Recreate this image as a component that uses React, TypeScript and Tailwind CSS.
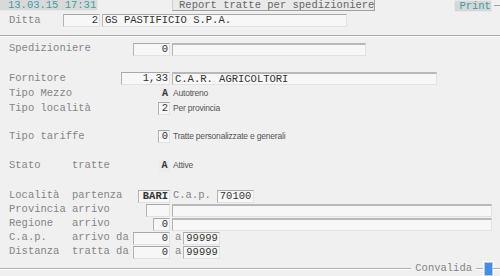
import React from 'react'

const mono = { fontFamily: '"Liberation Mono", "Courier New", monospace' }

function Box({ w, value = '', align = 'right', thick = false, bold = false }: { w: number; value?: string; align?: 'left' | 'right'; thick?: boolean; bold?: boolean }) {
    return (
        <div
            className={`h-[13px] bg-[#f7f7f7] border-l border-b border-r border-l-[#b4b4b4] border-b-[#e2e2e2] border-r-[#e2e2e2] ${thick ? 'border-t-2 border-t-[#b8b8b8]' : 'border-t border-t-[#a8a8a8]'} leading-[11px] text-[#333] whitespace-pre overflow-hidden ${align === 'right' ? 'text-right pr-[1px]' : 'text-left pl-[2px]'} ${bold ? 'font-bold' : ''}`}
            style={{ width: w }}
        >
            {value}
        </div>
    )
}

function Desc({ children }: { children: React.ReactNode }) {
    return <span className="ml-[3px] text-[8.5px] text-[#555] tracking-[-0.2px]" style={{ fontFamily: '"Liberation Sans", Arial, sans-serif' }}>{children}</span>
}

function Row({ label, h = 14, className = '', children, right }: { label: string; h?: number; className?: string; children: React.ReactNode; right?: React.ReactNode }) {
    return (
        <div className={`flex items-center ${className}`} style={{ height: h }}>
            <div className="w-[170px] flex items-center justify-between pl-[9px]">
                <span className="whitespace-pre text-[#858585]">{label}</span>
                {children}
            </div>
            {right}
        </div>
    )
}

export default function App() {
    return (
        <div className="w-[500px] h-[276px] bg-[#f0f0f0] text-[10.5px] overflow-hidden" style={mono}>
            {/* header */}
            <div className="flex items-start h-[13px]">
                <div className="w-[99px] h-[11px] bg-[#d9d9d9] text-[#3b9ea6] leading-[11px] pl-[8px] whitespace-pre border-r border-b border-[#e8e8e8]">13.03.15 17:31</div>
                <div className="ml-[74px] w-[204px] h-[11px] bg-[#e9e9e9] border-r border-b border-[#a0a0a0] border-l border-l-[#d0d0d0] text-[#666] leading-[10px] pl-[6px] whitespace-pre">Report tratte per spedizioniere</div>
                <div className="ml-[79px] w-[38px] h-[12px] bg-[#d6d6d6] border border-[#e8e8e8] text-[#3b9ea6] leading-[10px] pl-[4px]">Print</div>
                <div className="ml-[2px] mt-[5px] w-[6px] border-t border-[#a0a0a0]" />
            </div>

            {/* ditta */}
            <div className="flex items-center h-[15px]">
                <span className="w-[63px] pl-[9px] text-[#858585]">Ditta</span>
                <Box w={37} value="2" />
                <div className="ml-[2px]"><Box w={245} value="GS PASTIFICIO S.P.A." align="left" /></div>
            </div>

            <div className="mt-[7px] border-t border-t-[#a9a9a9] border-b border-b-white" />

            <Row label="Spedizioniere" className="mt-[5px]" right={<div className="ml-[2px]"><Box w={194} thick /></div>}>
                <Box w={37} value="0" />
            </Row>

            <Row label="Fornitore" h={15} className="mt-[15px]" right={<div className="ml-[2px]"><Box w={265} value="C.A.R. AGRICOLTORI" align="left" thick /></div>}>
                <Box w={49} value="1,33" />
            </Row>
            <Row label="Tipo Mezzo" h={15} right={<Desc>Autotreno</Desc>}>
                <div className="w-[10px] h-[12px] bg-[#ececec] text-[#333] leading-[12px] text-center font-bold text-[10px]">A</div>
            </Row>
            <Row label="Tipo località" h={15} right={<Desc>Per provincia</Desc>}>
                <Box w={12} value="2" />
            </Row>

            <Row label="Tipo tariffe" h={15} className="mt-[13px]" right={<Desc>Tratte personalizzate e generali</Desc>}>
                <Box w={12} value="0" />
            </Row>

            <Row label="Stato     tratte" h={15} className="mt-[14px]" right={<Desc>Attive</Desc>}>
                <div className="w-[11px] h-[12px] bg-[#ececec] text-[#333] leading-[12px] text-center font-bold text-[10px]">A</div>
            </Row>

            <Row label="Località  partenza" className="mt-[16px]" right={
                <div className="flex items-center">
                    <span className="ml-[3px] text-[#858585]">C.a.p.</span>
                    <div className="ml-[6px]"><Box w={37} value="70100" align="left" /></div>
                </div>
            }>
                <Box w={32} value="BARI" bold />
            </Row>
            <Row label="Provincia arrivo" right={<div className="ml-[2px]"><Box w={320} thick /></div>}>
                <Box w={24} />
            </Row>
            <Row label="Regione   arrivo" right={<div className="ml-[2px]"><Box w={320} thick /></div>}>
                <Box w={17} value="0" />
            </Row>
            <Row label="C.a.p.    arrivo da" right={
                <div className="flex items-center">
                    <span className="ml-[5px] text-[#858585]">a</span>
                    <div className="ml-[2px]"><Box w={37} value="99999" align="left" /></div>
                </div>
            }>
                <Box w={37} value="0" />
            </Row>
            <Row label="Distanza  tratta da" right={
                <div className="flex items-center">
                    <span className="ml-[5px] text-[#858585]">a</span>
                    <div className="ml-[2px]"><Box w={37} value="99999" align="left" /></div>
                </div>
            }>
                <Box w={37} value="0" />
            </Row>

            {/* bottom bar */}
            <div className="mt-[2px] h-[15px] flex items-center">
                <div className="flex-1 border-t border-t-[#b0b0b0] border-b border-b-white" />
                <span className="px-[4px] text-[#858585]">Convalida</span>
                <div className="w-[8px] border-t border-t-[#b0b0b0] border-b border-b-white" />
                <div className="w-[9px] h-[14px] bg-[#3d8ff0] border border-[#c8c8c8] outline outline-1 outline-white" />
                <div className="w-[7px] border-t border-t-[#b0b0b0] border-b border-b-white" />
            </div>
        </div>
    )
}
